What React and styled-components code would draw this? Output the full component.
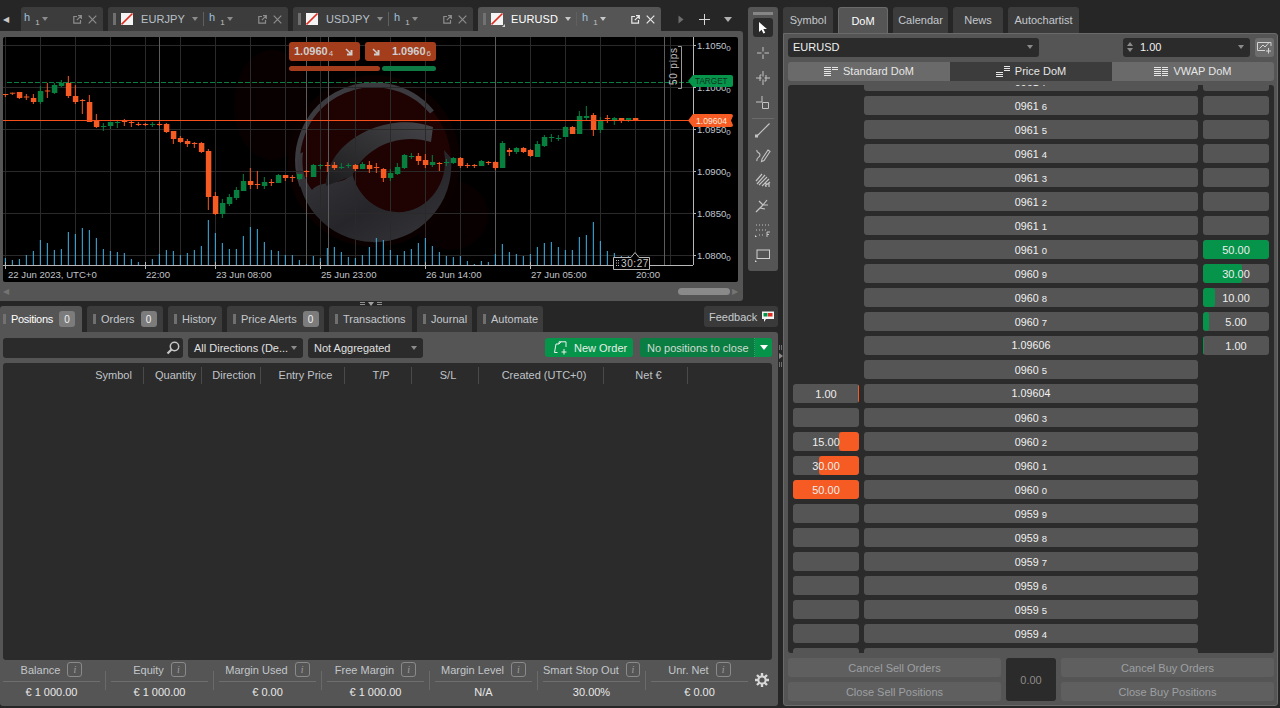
import React from "react";
import styled, { createGlobalStyle } from "styled-components";

const GlobalStyle = createGlobalStyle`
  html, body {
    margin: 0;
    padding: 0;
    background: #262626;
    overflow: hidden;
  }
  * { box-sizing: border-box; }
  body {
    font-family: "Liberation Sans", Arial, sans-serif;
    font-size: 11px;
    color: #d8d8d8;
  }
`;

const Page = styled.div`
  display: flex;
  width: 1280px;
  height: 708px;
  background: #262626;
  overflow: hidden;
`;

const LeftColumn = styled.div`
  display: flex;
  flex-direction: column;
  width: 778px;
  flex: none;
`;

const TopArea = styled.div`
  display: flex;
  height: 301px;
  gap: 5px;
`;

const ChartSection = styled.div`
  display: flex;
  flex-direction: column;
  width: 743px;
  padding-top: 7px;
`;

const TabStrip = styled.div`
  display: flex;
  height: 24px;
  gap: 5px;
  flex: none;
`;

const StripArrow = styled.div`
  width: 16px;
  display: flex;
  align-items: center;
  justify-content: center;
  padding-right: 5px;
  color: #c8c8c8;
  font-size: 8px;
`;

const ChartTab = styled.div`
  display: flex;
  align-items: center;
  position: relative;
  width: ${(p) => p.$w}px;
  padding-left: ${(p) => p.$pl || 5}px;
  background: ${(p) => (p.$active ? "#555555" : "#3c3c3c")};
  border-radius: 3px 3px 0 0;
  color: ${(p) => (p.$active ? "#ffffff" : "#b9c0c8")};
`;

const Grip = styled.span`
  width: 3px;
  height: ${(p) => p.$h || 12}px;
  margin-right: ${(p) => p.$mr || 5}px;
  flex: none;
  background-image: radial-gradient(#747474 0.7px, transparent 0.8px);
  background-size: 2px 2px;
`;

const Flag = styled.svg`
  width: 14px;
  height: 14px;
  margin: 0 -2px -2px 0;
  flex: none;
`;

const SymbolName = styled.span`
  width: ${(p) => p.$w}px;
  margin-left: 8px;
  flex: none;
  letter-spacing: 0.1px;
`;

const Caret = styled.span`
  width: 0;
  height: 0;
  flex: none;
  border-left: ${(p) => p.$s || 3}px solid transparent;
  border-right: ${(p) => p.$s || 3}px solid transparent;
  border-top: ${(p) => (p.$s || 3) + 1}px solid ${(p) => p.$c || "#8b8b8b"};
`;

const TabDivider = styled.span`
  width: 1px;
  height: 14px;
  margin: 0 5px;
  background: #606060;
  flex: none;
`;

const TimeFrame = styled.span`
  width: 18px;
  flex: none;
  display: flex;
  line-height: 1;
  color: #9fc0dc;
`;

const TimeFrameSub = styled.span`
  font-size: 8px;
  margin: 7px 0 0 5px;
  color: #c0c0c0;
`;

const TabActions = styled.div`
  margin-left: auto;
  padding-right: 6px;
  display: flex;
  align-items: center;
  gap: 6px;
`;

const TabIcon = styled.svg`
  width: 9px;
  height: 9px;
  flex: none;
  fill: none;
  stroke: ${(p) => p.$c || "#8d8d8d"};
  stroke-width: 1.2;
`;

const StripControls = styled.div`
  margin-left: 11px;
  display: flex;
  align-items: center;
  gap: 14px;
`;

const ForwardCaret = styled(Caret)`
  transform: rotate(-90deg);
`;

const ChartPanel = styled.div`
  flex: 1;
  display: flex;
  flex-direction: column;
  background: #555555;
  padding: 6px 5px 0 3px;
  border-radius: 0 3px 3px 0;
`;

const ChartFrame = styled.div`
  position: relative;
  height: 245px;
  flex: none;
  background: #000000;
  border-radius: 2px;
  overflow: hidden;
`;

const ChartSvg = styled.svg`
  display: block;
  width: 735px;
  height: 245px;
  font-family: "Liberation Sans", Arial, sans-serif;
  font-size: 9.6px;
`;

const QuoteBox = styled.div`
  position: absolute;
  top: 5px;
  left: ${(p) => p.$x}px;
  width: 71px;
  height: 19px;
  display: flex;
  align-items: center;
  justify-content: space-between;
  padding: 0 5px;
  background: #a33d1c;
  border-radius: 3px;
  color: #cfcfcf;
  font-weight: bold;
`;

const QuoteBar = styled.div`
  position: absolute;
  top: 29px;
  left: ${(p) => p.$x}px;
  width: ${(p) => p.$w}px;
  height: 5px;
  border-radius: 3px;
  background: ${(p) => p.$c};
`;

const SmallDigit = styled.span`
  font-size: 8px;
  font-weight: normal;
  margin-left: 1px;
  vertical-align: -1px;
`;

const QuoteGlyph = styled.svg`
  width: 8px;
  height: 8px;
  margin: 0 2px;
  flex: none;
`;

const ScrollRow = styled.div`
  flex: 1;
  display: flex;
  align-items: center;
  color: #747474;
  font-size: 8px;
`;

const ScrollThumb = styled.div`
  width: 52px;
  height: 7px;
  margin-left: auto;
  margin-right: 2px;
  border-radius: 4px;
  background: #8a8a8a;
`;

const ToolRail = styled.div`
  width: 30px;
  height: 264px;
  margin-top: 7px;
  background: #555555;
  border-radius: 3px;
  display: flex;
  flex-direction: column;
  align-items: center;
  padding-top: 5px;
`;

const RailGrip = styled.div`
  width: 20px;
  height: 3px;
  margin-bottom: 3px;
  background-image: radial-gradient(#8a8a8a 0.7px, transparent 0.8px);
  background-size: 2px 2px;
`;

const ToolButton = styled.div`
  width: 20px;
  height: 19px;
  margin-bottom: ${(p) => p.$mb ?? 6}px;
  display: flex;
  align-items: center;
  justify-content: center;
  border-radius: 3px;
  background: ${(p) => (p.$active ? "#2b2b2b" : "transparent")};
`;

const ToolIcon = styled.svg`
  width: 18px;
  height: 18px;
  fill: none;
  stroke: #c4c4c4;
  stroke-width: 1;
`;

const RailRule = styled.div`
  width: 22px;
  height: 1px;
  background: #6b6b6b;
  margin: -1px 0 1px;
`;

const ResizeGap = styled.div`
  height: 5px;
  flex: none;
  position: relative;
`;

const ResizeHandle = styled.div`
  position: absolute;
  left: 358px;
  top: 0;
  width: 26px;
  height: 5px;
  display: flex;
  justify-content: center;
  align-items: center;
  gap: 3px;
  color: #8f8f8f;
`;

const HandleBars = styled.span`
  width: 5px;
  height: 3px;
  border-top: 1px solid #8f8f8f;
  border-bottom: 1px solid #8f8f8f;
`;

const BottomTabs = styled.div`
  display: flex;
  height: 26px;
  gap: 5px;
  flex: none;
`;

const BottomTab = styled.div`
  width: ${(p) => p.$w}px;
  display: flex;
  align-items: center;
  padding-left: ${(p) => (p.$active ? 3 : 6)}px;
  background: ${(p) => (p.$active ? "#555555" : "#3c3c3c")};
  border-radius: 3px 3px 0 0;
  color: ${(p) => (p.$active ? "#ffffff" : "#c4c8cc")};
  letter-spacing: ${(p) => (p.$active ? "-0.3px" : "0")};
`;

const CountBadge = styled.span`
  width: 16px;
  height: 16px;
  margin-left: 6px;
  display: flex;
  align-items: center;
  justify-content: center;
  border-radius: 3px;
  background: #7c7c7c;
  color: #f2f2f2;
  font-size: 10px;
`;

const FeedbackButton = styled.div`
  margin-left: auto;
  width: 74px;
  height: 21px;
  display: flex;
  align-items: center;
  gap: 4px;
  padding-left: 5px;
  background: #3a3a3a;
  border-radius: 3px;
  color: #c8ccd0;
`;

const PositionsPanel = styled.div`
  height: 374px;
  flex: none;
  display: flex;
  flex-direction: column;
  padding: 6px 6px 0 3px;
  background: #555555;
  border-radius: 0 3px 3px 3px;
`;

const Toolbar = styled.div`
  display: flex;
  height: 20px;
  gap: 5px;
  flex: none;
`;

const SearchBox = styled.div`
  width: 180px;
  display: flex;
  align-items: center;
  justify-content: flex-end;
  padding-right: 2px;
  background: #2b2b2b;
  border-radius: 3px;
`;

const SelectBox = styled.div`
  width: ${(p) => p.$w}px;
  margin-left: ${(p) => p.$ml || 0}px;
  display: flex;
  align-items: center;
  padding: 0 ${(p) => p.$pr || 6}px ${(p) => p.$pb || 0}px ${(p) => p.$pl || 6}px;
  background: #2b2b2b;
  border-radius: 3px;
  color: ${(p) => p.$c || "#e0e0e0"};
  white-space: nowrap;
  & > :last-child {
    margin-left: auto;
  }
`;

const NewOrderButton = styled.div`
  margin-left: auto;
  width: 88px;
  height: 19px;
  display: flex;
  align-items: center;
  gap: 6px;
  padding-left: 8px;
  background: #05944a;
  border-radius: 3px;
  color: #e8efe9;
`;

const CloseButton = styled.div`
  width: 132px;
  height: 19px;
  margin-left: 2px;
  display: flex;
  background: #0a7e42;
  border-radius: 3px;
  color: #d2dcd4;
`;

const CloseLabel = styled.span`
  flex: 1;
  display: flex;
  align-items: center;
  padding-left: 7px;
  border-right: 1px dotted #35a36b;
`;

const CloseArrow = styled.span`
  width: 17px;
  display: flex;
  align-items: center;
  justify-content: center;
  background: #05944a;
  border-radius: 0 3px 3px 0;
`;

const TableBox = styled.div`
  flex: 1;
  margin-top: 5px;
  background: #2b2b2b;
  border-radius: 3px;
`;

const TableHead = styled.div`
  display: grid;
  grid-template-columns: 81px 60px 58px 59px 84px 67px 67px 125px 84px;
  height: 24px;
  align-items: center;
`;

const HeadCell = styled.div`
  height: 17px;
  display: flex;
  align-items: center;
  justify-content: center;
  padding-left: ${(p) => p.$pl ?? 6}px;
  white-space: nowrap;
  color: #c0c4c8;
  border-right: ${(p) => (p.$plain ? "none" : "1px solid #4a4a4a")};
`;

const StatsBar = styled.div`
  height: 46px;
  flex: none;
  display: flex;
  align-items: flex-start;
`;

const StatItem = styled.div`
  width: 97px;
  flex: none;
`;

const StatLabelRow = styled.div`
  height: 22px;
  padding-bottom: 2px;
  display: flex;
  align-items: center;
  justify-content: center;
  gap: 7px;
  color: #c2c6ca;
  border-bottom: 1px solid #6e6e6e;
  white-space: nowrap;
`;

const InfoBadge = styled.span`
  width: 15px;
  height: 15px;
  display: flex;
  align-items: center;
  justify-content: center;
  border: 1px solid #8a8a8a;
  border-radius: 3px;
  font-family: "Liberation Serif", serif;
  font-style: italic;
  font-size: 10px;
  color: #a0a0a0;
`;

const StatValue = styled.div`
  height: 19px;
  display: flex;
  align-items: center;
  justify-content: center;
  color: #e8e8e8;
`;

const StatDivider = styled.div`
  width: 1px;
  height: 19px;
  margin: 11px 5px 0;
  background: #6a6a6a;
  flex: none;
`;

const GearSlot = styled.div`
  margin: 12px 0 0 6px;
`;

const VerticalSplit = styled.div`
  width: 5px;
  flex: none;
  padding-top: 345px;
  display: flex;
  flex-direction: column;
  align-items: center;
  gap: 4px;
`;

const SplitMark = styled.span`
  width: 3px;
  height: ${(p) => p.$h}px;
  border-left: 1px solid #6e6e6e;
  border-right: 1px solid #6e6e6e;
`;

const RightColumn = styled.div`
  width: 495px;
  flex: none;
  display: flex;
  flex-direction: column;
  padding-top: 7px;
`;

const SideTabs = styled.div`
  display: flex;
  height: 26px;
  gap: 5px;
  flex: none;
`;

const SideTab = styled.div`
  width: ${(p) => p.$w}px;
  display: flex;
  align-items: center;
  justify-content: center;
  background: ${(p) => (p.$active ? "#555555" : "#3c3c3c")};
  border-radius: 3px 3px 0 0;
  border: ${(p) => (p.$active ? "1px solid #6a6a6a" : "none")};
  border-bottom: none;
  color: ${(p) => (p.$active ? "#ffffff" : "#c4c8cc")};
`;

const DomPanel = styled.div`
  height: 673px;
  display: flex;
  flex-direction: column;
  gap: 5px;
  padding: 4px 3px 4px 4px;
  background: #555555;
  border: 1px solid #6a6a6a;
  border-radius: 0 3px 3px 3px;
`;

const DomTop = styled.div`
  display: flex;
  height: 19px;
  flex: none;
`;

const SpinArrows = styled.span`
  display: flex;
  flex-direction: column;
  gap: 2px;
  margin-right: 7px;
`;

const UpArrow = styled.span`
  width: 0;
  height: 0;
  border-left: 3px solid transparent;
  border-right: 3px solid transparent;
  border-bottom: 4px solid #8b8b8b;
`;

const ChartAddButton = styled.div`
  width: 19px;
  margin-left: 5px;
  display: flex;
  align-items: center;
  justify-content: center;
  background: #6d6d6d;
  border-radius: 3px;
`;

const ModeRow = styled.div`
  display: grid;
  grid-template-columns: 162px 162px 162px;
  height: 19px;
  flex: none;
`;

const ModeButton = styled.div`
  display: flex;
  align-items: center;
  justify-content: center;
  gap: 5px;
  padding-bottom: 1px;
  background: ${(p) => (p.$active ? "#3c3c3c" : "#6a6a6a")};
  color: #e6e6e6;
  border-radius: ${(p) => p.$r || "0"};
`;

const DomBody = styled.div`
  height: 568px;
  flex: none;
  margin-top: -1px;
  padding-left: 5px;
  background: #2b2b2b;
  border-radius: 3px;
  overflow: hidden;
`;

const DomList = styled.div`
  display: grid;
  grid-template-columns: 66px 334px 66px;
  grid-auto-rows: 19px;
  gap: 5px;
  margin-top: -13px;
`;

const VolumeCell = styled.div`
  position: relative;
  display: flex;
  align-items: center;
  justify-content: center;
  background: #555555;
  border-radius: 3px;
  color: #eeeeee;
  overflow: hidden;
  visibility: ${(p) => (p.$hidden ? "hidden" : "visible")};
`;

const VolumeFill = styled.div`
  position: absolute;
  top: 0;
  bottom: 0;
  ${(p) => (p.$side === "sell" ? "right: 0;" : "left: 0;")}
  background: ${(p) => (p.$side === "sell" ? "#f55b22" : "#05944a")};
  border-radius: 3px;
`;

const VolumeText = styled.span`
  position: relative;
`;

const PriceCell = styled.div`
  display: flex;
  align-items: center;
  justify-content: center;
  padding: ${(p) => (p.$full ? "0 0 1px" : "1px 0 0")};
  background: #555555;
  border-radius: 3px;
  color: #f2f2f2;
  font-size: 10.67px;
  letter-spacing: 0.1px;
`;

const PriceTail = styled.span`
  font-size: 9.5px;
  margin-left: 3px;
`;

const DomBottom = styled.div`
  display: grid;
  grid-template-columns: 213px 50px 213px;
  grid-template-rows: 19px 19px;
  gap: 5px;
  flex: none;
`;

const DisabledButton = styled.div`
  display: flex;
  align-items: center;
  justify-content: center;
  background: #5f5f5f;
  border-radius: 3px;
  color: #9d9fa2;
`;

const NetBox = styled.div`
  grid-row: 1 / span 2;
  grid-column: 2;
  display: flex;
  align-items: center;
  justify-content: center;
  background: #2b2b2b;
  border-radius: 3px;
  color: #8e8a88;
`;

const GridV = [5, 40, 75, 110, 145, 180, 215, 250, 285, 320, 355, 390, 425, 460, 530, 565, 600, 635, 670];
const SepV = [159, 306, 328, 495, 664];
const PriceAxis = [
  [45, "1.1050"],
  [87, "1.1000"],
  [129, "1.0950"],
  [171, "1.0900"],
  [213, "1.0850"],
  [255, "1.0800"],
];
const TimeAxis = [
  [8, "22 Jun 2023, UTC+0"],
  [146, "22:00"],
  [216, "23 Jun 08:00"],
  [321, "25 Jun 23:00"],
  [426, "26 Jun 14:00"],
  [531, "27 Jun 05:00"],
  [636, "20:00"],
];
const AxisTicks = [5, 145, 215, 320, 425, 530];

// height of each volume bar, left to right
const VOLUMES = [
  7, 5, 6, 10, 14, 25, 22, 15, 16, 33, 31, 37, 35, 27, 16, 14, 13, 12, 6, 3, 0, 6, 11, 15, 14, 10, 12, 15, 19, 45, 32, 22, 16, 16,
  29, 38, 36, 23, 15, 14, 10, 10, 5, 1, 9, 7, 17, 18, 13, 8, 7, 10, 18, 27, 25, 15, 10, 14, 16, 22, 27, 19, 13, 9, 8, 9, 4, 1, 4,
  3, 11, 21, 13, 11, 9, 11, 18, 22, 23, 18, 15, 15, 28, 30, 43, 24, 14, 12, 9, 9,
];

// color, body top, body bottom, high, low
const CANDLES = [
  ["o", 94, 94.7, 94, 97], ["o", 92.7, 93.5, 92.7, 95], ["o", 92, 98, 92, 99], ["o", 96.5, 97.3, 94, 100],
  ["o", 98, 102, 94, 104], ["g", 91, 102, 86, 104], ["o", 90.5, 91.3, 83, 98], ["g", 85, 93, 83, 94],
  ["g", 83, 86, 80, 87], ["o", 83, 96, 76, 98], ["o", 96, 102, 85, 104], ["o", 100, 100.8, 99, 114],
  ["o", 102, 122, 95, 122], ["o", 121, 127, 114, 128], ["g", 126, 126.8, 123, 131], ["g", 122, 126, 122, 129],
  ["g", 122, 122.8, 121, 128], ["o", 121, 121.8, 119, 126], ["o", 122, 122.8, 121, 127], ["o", 124, 124.8, 122, 126],
  ["o", 124, 124.8, 123, 126], ["g", 124, 124.8, 122, 127], ["o", 124, 124.8, 122, 126], ["o", 124, 132, 123, 133],
  ["o", 131, 139, 131, 144], ["o", 138, 142, 136, 143], ["o", 141, 144, 139, 147], ["o", 143, 143.8, 142, 148],
  ["o", 143, 152, 142, 153], ["o", 151, 197, 149, 210], ["o", 196, 214, 192, 215], ["g", 203, 214, 199, 218],
  ["g", 197, 204, 194, 206], ["g", 190, 198, 187, 200], ["g", 181, 191, 174, 191], ["o", 181, 185, 168, 189],
  ["o", 184, 184.8, 171, 189], ["g", 182, 186, 177, 189], ["o", 182, 182.8, 179, 186], ["g", 175, 183, 174, 183],
  ["o", 175, 178, 175, 181], ["o", 177, 177.8, 175, 182], ["g", 174, 179, 174, 180], ["o", 171, 171.8, 170, 177],
  ["g", 165, 177, 164, 177], ["g", 165, 166, 164, 169], ["o", 165, 165.8, 162, 172], ["o", 165, 168, 162, 170],
  ["g", 167, 168, 163, 169], ["g", 165, 166, 163, 168], ["o", 165, 169, 164, 171], ["g", 164, 169, 162, 169],
  ["o", 165, 169, 161, 173], ["o", 167, 167.8, 163, 173], ["o", 169, 178, 168, 182], ["g", 173, 178, 169, 181],
  ["g", 167, 174, 163, 175], ["g", 155, 168, 154, 169], ["g", 156, 156.8, 153, 159], ["o", 156, 161, 153, 165],
  ["o", 160, 165, 154, 168], ["g", 162, 165, 155, 167], ["o", 163, 163.8, 162, 171], ["g", 162, 163, 159, 166],
  ["g", 158, 163, 157, 164], ["o", 158, 166, 157, 168], ["o", 165, 165.8, 163, 168], ["o", 165, 165.8, 164, 168],
  ["g", 161, 166, 160, 166], ["o", 162, 162.8, 161, 165], ["o", 162, 168, 161, 170], ["g", 143, 168, 141, 168],
  ["o", 150, 152, 148, 156], ["g", 148, 152, 147, 154], ["o", 148, 152, 147, 153], ["o", 150, 156, 149, 157],
  ["g", 144, 157, 141, 157], ["g", 137, 146, 135, 147], ["g", 137, 138, 134, 142], ["g", 138, 139, 135, 141],
  ["g", 127, 137, 126, 137], ["o", 127, 134, 126, 134], ["g", 116, 134, 111, 134], ["g", 116, 118, 106, 120],
  ["o", 115, 130, 113, 136], ["g", 121, 130, 117, 133], ["o", 118, 119, 115, 123], ["g", 118, 121, 117, 125],
  ["o", 118, 120, 118, 123], ["g", 118, 120, 118, 122], ["o", 118, 120, 118, 121],
];

const candleX = (k) => 5.33 + 7 * k;
const UP = "#07803f";
const DOWN = "#f55b22";

function Watermark() {
  return (
    <g>
      <defs>
        <linearGradient id="bandFill" x1="0" y1="0" x2="1" y2="1">
          <stop offset="0" stopColor="#3a3a3e" />
          <stop offset="0.55" stopColor="#26262a" />
          <stop offset="1" stopColor="#37373b" />
        </linearGradient>
        <linearGradient id="swooshFill" x1="0" y1="1" x2="1" y2="0">
          <stop offset="0" stopColor="#1c1c1e" />
          <stop offset="1" stopColor="#454549" />
        </linearGradient>
      </defs>
      <ellipse cx="272" cy="105" rx="38" ry="55" fill="#080000" />
      <ellipse cx="450" cy="215" rx="38" ry="35" fill="#080000" />
      <circle cx="374" cy="161" r="86" fill="#0a0000" />
      <circle cx="374" cy="161" r="77" fill="#1f0202" />
      <path d="M302 186 A76 76 0 0 1 432 112" fill="none" stroke="#3a3a3f" strokeWidth="5" />
      <path d="M298 155 A77 77 0 1 0 451 158 L444 150 A47 51 0 1 1 352 172 C345 188 322 178 312 190 C304 180 301 168 303 152 Z" fill="url(#bandFill)" />
      <path d="M326 186 C326 140 388 110 433 127 L431 142 C398 132 364 148 352 176 Z" fill="url(#swooshFill)" />
    </g>
  );
}

function Chart() {
  return (
    <ChartSvg viewBox="3 37 735 245">
      <Watermark />
      {PriceAxis.map(([y]) => (
        <line key={y} x1="3" x2="693" y1={y + 0.5} y2={y + 0.5} stroke="#2a2a2a" />
      ))}
      {GridV.map((x) => (
        <line key={x} x1={x + 0.5} x2={x + 0.5} y1="37" y2="265" stroke="#2a2a2a" />
      ))}
      {SepV.map((x) => (
        <line key={x} x1={x + 0.5} x2={x + 0.5} y1="37" y2="265" stroke="#5c5c5c" />
      ))}
      {VOLUMES.map((h, k) => (
        <line key={k} x1={candleX(k)} x2={candleX(k)} y1={265} y2={265 - h} stroke="#3fb5e8" />
      ))}
      <line x1="7" x2="690" y1="82.5" y2="82.5" stroke="#0b7d41" strokeDasharray="5 2" />
      {CANDLES.map(([c, top, bottom, hi, lo], k) => {
        const x = candleX(k);
        const fill = c === "g" ? UP : DOWN;
        return (
          <g key={k} fill={fill}>
            <rect x={x - 0.5} y={hi} width="1" height={lo - hi} />
            <rect x={x - 2.5} y={top} width="5.5" height={Math.max(bottom - top, 1)} />
          </g>
        );
      })}
      <line x1="3" x2="690" y1="120.5" y2="120.5" stroke="#f5501c" />
      <line x1="3" x2="693" y1="265.5" y2="265.5" stroke="#b8b8b8" />
      <line x1="693.5" x2="693.5" y1="37" y2="265" stroke="#b8b8b8" />
      {AxisTicks.map((x) => (
        <line key={x} x1={x + 0.5} x2={x + 0.5} y1="262" y2="269" stroke="#b8b8b8" />
      ))}
      {PriceAxis.map(([y, label]) => (
        <g key={y}>
          <line x1="693" x2="696" y1={y + 0.5} y2={y + 0.5} stroke="#b8b8b8" />
          <text x="697" y={y + 4} fill="#c0c8d0">
            {label}
            <tspan fontSize="8" dy="2">0</tspan>
          </text>
        </g>
      ))}
      {TimeAxis.map(([x, label]) => (
        <text key={x} x={x} y="278" fill="#c0c4c8">{label}</text>
      ))}
      <path d="M678 46.5 H681.5 V88.5 H678" fill="none" stroke="#9a9a9a" />
      <text transform="translate(677 85) rotate(-90)" fontSize="10" fill="#c0c0c0" letterSpacing="0.8">50 pips</text>
      <path d="M688 81 L693 75 H731 Q733 75 733 77 V85 Q733 87 731 87 H693 Z" fill="#05944a" />
      <text x="695" y="84" fontSize="8.2" fill="#10301f">TARGET</text>
      <path d="M688 120.5 L693 114 H731 Q733 114 733 116 L731 120.5 L733 125 Q733 127 731 127 H693 Z" fill="#f55b22" />
      <text x="696" y="123.5" fontSize="8.6" fill="#ffe9df">1.09604</text>
      <path d="M613.5 257.5 H631 L635 252.5 L639 257.5 H649.5 V269.5 H613.5 Z" fill="#000" stroke="#b8b8b8" />
      <g fill="#b8b8b8">
        {[260, 262.5, 265].map((y) => (
          <g key={y}>
            <rect x="616" y={y} width="1" height="1" />
            <rect x="618" y={y} width="1" height="1" />
          </g>
        ))}
      </g>
      <text x="621" y="267" fontSize="10" fill="#c8c8c8" letterSpacing="0.6">30:27</text>
    </ChartSvg>
  );
}

function PlaceholderFlag({ marked }) {
  return (
    <Flag viewBox="0 0 14 14">
      <rect width="12" height="12" fill="#f4f4f4" />
      <line x1="0.5" y1="11.5" x2="11.5" y2="0.5" stroke="#e02b1e" strokeWidth="1.6" />
      {marked ? <path d="M14 11 V14 H11 Z" fill="#d0d0d0" /> : null}
    </Flag>
  );
}

function PopoutIcon({ color }) {
  return (
    <TabIcon viewBox="0 0 9 9" $c={color}>
      <path d="M4 1.5 H0.8 V8.2 H7.5 V5 M5 0.7 H8.3 V4 M8.2 0.8 L3.8 5.2" />
    </TabIcon>
  );
}

function CloseIcon({ color }) {
  return (
    <TabIcon viewBox="0 0 9 9" $c={color}>
      <path d="M0.7 0.7 L8.3 8.3 M8.3 0.7 L0.7 8.3" />
    </TabIcon>
  );
}

function TabControls({ active }) {
  const color = active ? "#e8e8e8" : undefined;
  return (
    <TabActions>
      <PopoutIcon color={color} />
      <CloseIcon color={color} />
    </TabActions>
  );
}

function TimeFrameTag() {
  return (
    <TimeFrame>
      h<TimeFrameSub>1</TimeFrameSub>
    </TimeFrame>
  );
}

function SymbolTab({ name, active }) {
  const caret = active ? "#c8c8c8" : undefined;
  return (
    <ChartTab $w={active ? 183 : 180} $active={active}>
      <Grip />
      <PlaceholderFlag marked={active} />
      <SymbolName $w={active ? 54 : 51}>{name}</SymbolName>
      <Caret $c={caret} />
      <TabDivider />
      <TimeFrameTag />
      <Caret $c={caret} />
      <TabControls active={active} />
    </ChartTab>
  );
}

function ToolGlyph({ children }) {
  return <ToolIcon viewBox="0 0 18 18">{children}</ToolIcon>;
}

function Tools() {
  return (
    <ToolRail>
      <RailGrip />
      <ToolButton $active>
        <svg width="12" height="14" viewBox="0 0 12 14">
          <path d="M2 1 L2 11 L4.6 8.8 L6.4 12.6 L8.2 11.8 L6.4 8 L10 8 Z" fill="#ffffff" />
        </svg>
      </ToolButton>
      <ToolButton>
        <ToolGlyph><path d="M9 3 V7.5 M9 10.5 V15 M3 9 H7.5 M10.5 9 H15" /></ToolGlyph>
      </ToolButton>
      <ToolButton>
        <ToolGlyph><path d="M9 2 V7.5 M9 10.5 V16 M2 9 H7.5 M10.5 9 H16 M6 6 V12 M12 6 V12 M6 6 H7.5 M10.5 12 H12" /></ToolGlyph>
      </ToolButton>
      <ToolButton $mb={7}>
        <ToolGlyph><path d="M8 2 V8 H2 M8.5 8.5 H14.5 V14.5 H8.5 Z" /></ToolGlyph>
      </ToolButton>
      <RailRule />
      <ToolButton>
        <ToolGlyph><path d="M2.5 15.5 L15.5 2.5" strokeWidth="1.2" /><rect x="1.5" y="14" width="2" height="2" fill="#c4c4c4" /></ToolGlyph>
      </ToolButton>
      <ToolButton>
        <ToolGlyph><path d="M3 15 C2 11 6 12 6 9 C6 6 2 7 3 4 M8 13 L14 4 L16 5.5 L10 14.5 L7.5 15.5 Z" strokeWidth="1.1" /></ToolGlyph>
      </ToolButton>
      <ToolButton>
        <ToolGlyph><path d="M2 10 L8 3 M3 13 L11 4 M5 14 L13 6 M8 15 L15 8 M11 15 L16 11 M12 12 V16 M15 12 V16" strokeWidth="1.2" /></ToolGlyph>
      </ToolButton>
      <ToolButton>
        <ToolGlyph><path d="M2 16 L9 9 M9 9 L5 5 M9 9 L13 4 M9 9 L14 9 M6 12 L11 13" strokeWidth="1.2" /></ToolGlyph>
      </ToolButton>
      <ToolButton>
        <ToolGlyph><path d="M2 4 H16 M2 9 H12 M5 14 H11" strokeDasharray="1 2" /><path d="M1 16 L3 16 L1 14 Z" fill="#d8d8d8" stroke="none" /><path d="M13 11 V16 M13 11 H16 M13 13.5 H15" /></ToolGlyph>
      </ToolButton>
      <ToolButton>
        <ToolGlyph><rect x="3" y="4" width="12.5" height="8.5" stroke="#d0d0d0" /><path d="M1 16 L3 16 L1 14 Z" fill="#d8d8d8" stroke="none" /></ToolGlyph>
      </ToolButton>
    </ToolRail>
  );
}

const QuoteArrow = () => (
  <QuoteGlyph viewBox="0 0 8 8">
    <path d="M0.5 1.5 L1.5 0.5 L5.5 4.5 L5.5 2 L7.5 2 L7.5 7.5 L2 7.5 L2 5.5 L4.5 5.5 Z" fill="#cfcfcf" />
  </QuoteGlyph>
);

const POSITION_TABS = [
  { label: "Positions", w: 82, count: 0, active: true },
  { label: "Orders", w: 76, count: 0 },
  { label: "History", w: 54 },
  { label: "Price Alerts", w: 97, count: 0 },
  { label: "Transactions", w: 83 },
  { label: "Journal", w: 55 },
  { label: "Automate", w: 66 },
];

const COLUMNS = ["Symbol", "Quantity", "Direction", "Entry Price", "T/P", "S/L", "Created (UTC+0)", "Net €"];

const STATS = [
  ["Balance", "€ 1 000.00"],
  ["Equity", "€ 1 000.00"],
  ["Margin Used", "€ 0.00"],
  ["Free Margin", "€ 1 000.00"],
  ["Margin Level", "N/A"],
  ["Smart Stop Out", "30.00%"],
  ["Unr. Net", "€ 0.00"],
];

const GearIcon = () => (
  <svg width="16" height="16" viewBox="0 0 16 16">
    <g stroke="#d8d8d8" strokeWidth="2.4">
      <path d="M8 1 V15 M1 8 H15 M3 3 L13 13 M13 3 L3 13" />
    </g>
    <circle cx="8" cy="8" r="4.6" fill="#d8d8d8" />
    <circle cx="8" cy="8" r="2.6" fill="#555555" />
  </svg>
);

const ModeIcon = ({ left, right }) => (
  <svg width="14" height="11" viewBox="0 0 14 11" fill="#e6e6e6">
    {left.map((y) => (
      <rect key={`l${y}`} x="0" y={y} width="7" height="1" />
    ))}
    {right.map((y) => (
      <rect key={`r${y}`} x="8" y={y} width="6" height="1" />
    ))}
  </svg>
);

// ladder top to bottom: price head, tail digit (or full price), sell and buy volumes
const LADDER = [
  ["0961", "7"], ["0961", "6"], ["0961", "5"], ["0961", "4"], ["0961", "3"], ["0961", "2"], ["0961", "1"],
  ["0961", "0", null, { v: "50.00", w: 66 }],
  ["0960", "9", null, { v: "30.00", w: 39 }],
  ["0960", "8", null, { v: "10.00", w: 12 }],
  ["0960", "7", null, { v: "5.00", w: 6 }],
  ["1.09606", null, null, { v: "1.00", w: 1 }],
  ["0960", "5", "none", "none"],
  ["1.09604", null, { v: "1.00", w: 1 }, "none"],
  ["0960", "3", {}, "none"],
  ["0960", "2", { v: "15.00", w: 20 }, "none"],
  ["0960", "1", { v: "30.00", w: 40 }, "none"],
  ["0960", "0", { v: "50.00", w: 66 }, "none"],
  ["0959", "9", {}, "none"], ["0959", "8", {}, "none"], ["0959", "7", {}, "none"], ["0959", "6", {}, "none"],
  ["0959", "5", {}, "none"], ["0959", "4", {}, "none"], ["0959", "3", {}, "none"],
];

function Volume({ side, data }) {
  if (data === "none") return <VolumeCell $hidden />;
  const cell = data || {};
  return (
    <VolumeCell>
      {cell.w ? <VolumeFill $side={side} style={{ width: cell.w }} /> : null}
      {cell.v ? <VolumeText>{cell.v}</VolumeText> : null}
    </VolumeCell>
  );
}

function Ladder() {
  return (
    <DomList>
      {LADDER.map(([head, tail, sell, buy], i) => (
        <React.Fragment key={i}>
          <Volume side="sell" data={i < 13 ? "none" : sell} />
          <PriceCell $full={!tail}>
            {head}
            {tail ? <PriceTail>{tail}</PriceTail> : null}
          </PriceCell>
          <Volume side="buy" data={buy} />
        </React.Fragment>
      ))}
    </DomList>
  );
}

export default function App() {
  return (
    <Page>
      <GlobalStyle />
      <LeftColumn>
        <TopArea>
          <ChartSection>
            <TabStrip>
              <StripArrow>◀</StripArrow>
              <ChartTab $w={82} $pl={3}>
                <TimeFrameTag />
                <Caret />
                <TabControls />
              </ChartTab>
              <SymbolTab name="EURJPY" />
              <SymbolTab name="USDJPY" />
              <SymbolTab name="EURUSD" active />
              <StripControls>
                <ForwardCaret $c="#6e6e6e" $s={4} />
                <svg width="11" height="11" viewBox="0 0 11 11">
                  <path d="M5.5 0 V11 M0 5.5 H11" stroke="#d8d8d8" />
                </svg>
                <Caret $c="#b0b0b0" $s={4} />
              </StripControls>
            </TabStrip>
            <ChartPanel>
              <ChartFrame>
                <Chart />
                <QuoteBox $x={286}>
                  <span>1.0960<SmallDigit>4</SmallDigit></span>
                  <QuoteArrow />
                </QuoteBox>
                <QuoteBox $x={362}>
                  <QuoteArrow />
                  <span>1.0960<SmallDigit>6</SmallDigit></span>
                </QuoteBox>
                <QuoteBar $x={286} $w={91} $c="#a33d1c" />
                <QuoteBar $x={379} $w={54} $c="#0e7a44" />
              </ChartFrame>
              <ScrollRow>
                ◀
                <ScrollThumb />
                ▶
              </ScrollRow>
            </ChartPanel>
          </ChartSection>
          <Tools />
        </TopArea>
        <ResizeGap>
          <ResizeHandle>
            <HandleBars />
            <Caret $c="#a0a0a0" />
            <HandleBars />
          </ResizeHandle>
        </ResizeGap>
        <BottomTabs>
          {POSITION_TABS.map((tab) => (
            <BottomTab key={tab.label} $w={tab.w} $active={tab.active}>
              <Grip $h={10} />
              {tab.label}
              {tab.count !== undefined ? <CountBadge>{tab.count}</CountBadge> : null}
            </BottomTab>
          ))}
          <FeedbackButton>
            Feedback
            <svg width="14" height="13" viewBox="0 0 14 13">
              <path d="M1 1.5 H13 V9 H5 L3 12 V9 H1 Z" fill="#f4f4f4" />
              <rect x="2.5" y="3" width="4" height="3.5" fill="#05944a" />
              <rect x="7" y="3" width="4.5" height="3.5" fill="#e02b1e" />
            </svg>
          </FeedbackButton>
        </BottomTabs>
        <PositionsPanel>
          <Toolbar>
            <SearchBox>
              <svg width="16" height="16" viewBox="0 0 16 16" fill="none" stroke="#c8c8c8">
                <circle cx="9.5" cy="6.5" r="4.2" strokeWidth="1.5" />
                <path d="M6.5 9.5 L2.5 13.5" strokeWidth="2.2" />
              </svg>
            </SearchBox>
            <SelectBox $w={115}>
              All Directions (De...
              <Caret />
            </SelectBox>
            <SelectBox $w={115}>
              Not Aggregated
              <Caret />
            </SelectBox>
            <NewOrderButton>
              <svg width="15" height="14" viewBox="0 0 15 14" fill="none" stroke="#f0f0f0">
                <path d="M4.5 11.5 H1.5 L3 3 H6 V0.8 H13 V6 M6 3 L8 0.8 M11 8 V13.5 M8.5 11 H13.5" />
              </svg>
              New Order
            </NewOrderButton>
            <CloseButton>
              <CloseLabel>No positions to close</CloseLabel>
              <CloseArrow><Caret $c="#ffffff" $s={4} /></CloseArrow>
            </CloseButton>
          </Toolbar>
          <TableBox>
            <TableHead>
              <HeadCell $plain />
              {COLUMNS.map((c, i) => (
                <HeadCell key={c} $pl={i === 0 ? 0 : 6}>{c}</HeadCell>
              ))}
            </TableHead>
          </TableBox>
          <StatsBar>
            {STATS.map(([label, value], i) => (
              <React.Fragment key={label}>
                {i > 0 ? <StatDivider /> : null}
                <StatItem>
                  <StatLabelRow>
                    {label}
                    <InfoBadge>i</InfoBadge>
                  </StatLabelRow>
                  <StatValue>{value}</StatValue>
                </StatItem>
              </React.Fragment>
            ))}
            <GearSlot><GearIcon /></GearSlot>
          </StatsBar>
        </PositionsPanel>
      </LeftColumn>
      <VerticalSplit>
        <SplitMark $h={5} />
        <ForwardCaret $c="#8a8a8a" />
        <SplitMark $h={5} />
      </VerticalSplit>
      <RightColumn>
        <SideTabs>
          <SideTab $w={50}>Symbol</SideTab>
          <SideTab $w={50} $active>DoM</SideTab>
          <SideTab $w={55}>Calendar</SideTab>
          <SideTab $w={50}>News</SideTab>
          <SideTab $w={71}>Autochartist</SideTab>
        </SideTabs>
        <DomPanel>
          <DomTop>
            <SelectBox $w={251} $pl={5} $pb={1} $c="#f0f0f0">
              EURUSD
              <Caret />
            </SelectBox>
            <SelectBox $w={127} $pl={4} $pb={1} $ml={84} $c="#f0f0f0">
              <SpinArrows>
                <UpArrow />
                <Caret />
              </SpinArrows>
              1.00
              <Caret />
            </SelectBox>
            <ChartAddButton>
              <svg width="15" height="13" viewBox="0 0 15 13" fill="none" stroke="#d4d4d4">
                <path d="M0.5 9.5 V1.5 H14 V5 M0.5 9.5 H8 M2.5 7.5 L6 4 L8 6 L12 1.5 M11.5 7 V12.5 M9 10 H14" />
              </svg>
            </ChartAddButton>
          </DomTop>
          <ModeRow>
            <ModeButton $r="3px 0 0 3px">
              <ModeIcon left={[1, 3, 5, 7, 9]} right={[1, 3]} />
              Standard DoM
            </ModeButton>
            <ModeButton $active>
              <ModeIcon left={[6, 8, 10]} right={[0, 2, 4]} />
              Price DoM
            </ModeButton>
            <ModeButton $r="0 3px 3px 0">
              <ModeIcon left={[1, 3, 5, 7, 9]} right={[1, 3, 5, 7, 9]} />
              VWAP DoM
            </ModeButton>
          </ModeRow>
          <DomBody>
            <Ladder />
          </DomBody>
          <DomBottom>
            <DisabledButton>Cancel Sell Orders</DisabledButton>
            <NetBox>0.00</NetBox>
            <DisabledButton>Cancel Buy Orders</DisabledButton>
            <DisabledButton>Close Sell Positions</DisabledButton>
            <DisabledButton>Close Buy Positions</DisabledButton>
          </DomBottom>
        </DomPanel>
      </RightColumn>
    </Page>
  );
}
